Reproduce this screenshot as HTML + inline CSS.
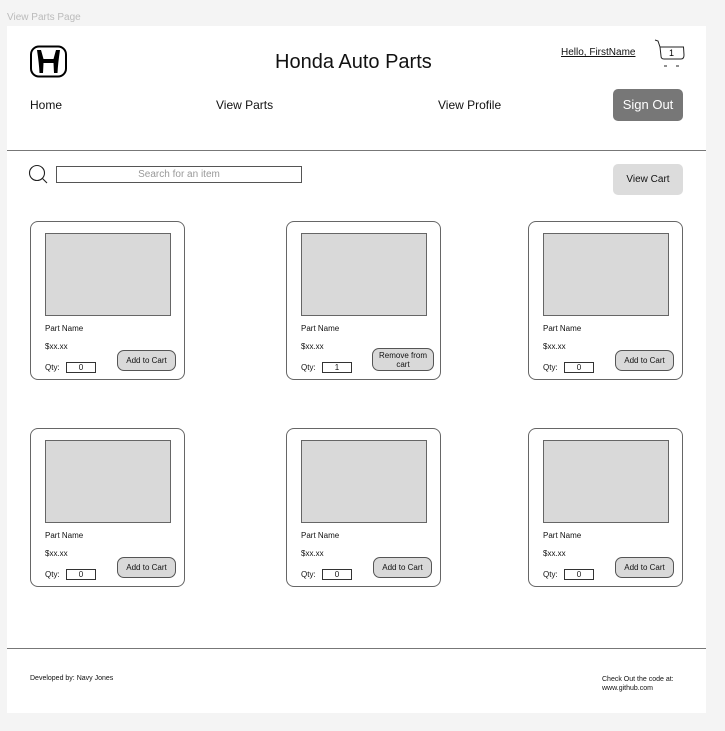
<!DOCTYPE html>
<html><head><meta charset="utf-8"><style>
*{margin:0;padding:0;box-sizing:border-box}
body{width:725px;height:731px;background:#f4f4f4;position:relative;font-family:"Liberation Sans",sans-serif;color:#111;overflow:hidden}
.a{position:absolute;white-space:nowrap}
.panel{position:absolute;left:7px;top:26px;width:699px;height:687px;background:#fff}
.hr{position:absolute;left:7px;width:699px;height:1px;background:#777}
.card{position:absolute;width:155px;height:159px;border:1px solid #666;border-radius:8px;background:#fff}
.img{position:absolute;left:14px;top:11px;width:126px;height:83px;background:#d9d9d9;border:1px solid #666}
.pn{position:absolute;left:14px;top:102px;font-size:8px}
.pr{position:absolute;left:14px;top:120px;font-size:8px}
.q{position:absolute;left:14px;top:141px;font-size:8px}
.qb{position:absolute;left:35px;top:140px;width:30px;height:11px;border:1px solid #333;font-size:8px;text-align:center;line-height:9px}
.btn{position:absolute;left:86px;top:128px;width:59px;height:21px;border:1px solid #555;border-radius:7px;background:#d9d9d9;font-size:8px;text-align:center;line-height:19px}
</style></head><body>
<div class="a" style="left:7px;top:12px;font-size:10px;color:#bbb">View Parts Page</div>
<div class="panel"></div>
<svg class="a" style="left:29px;top:45px" width="40" height="34" viewBox="0 0 40 34">
<rect x="2" y="1.5" width="35" height="30" rx="8" fill="none" stroke="#000" stroke-width="2"/>
<path d="M8 5 L12 5 L14.5 14 L24.5 14 L27 5 L31 5 Q29 18 28.5 28 L25 28 L24.5 18 L14.5 18 L14 28 L10.5 28 Q10 18 8 5 Z" fill="#000"/>
</svg>
<div class="a" style="left:275px;top:51px;font-size:20px">Honda Auto Parts</div>
<div class="a" style="left:561px;top:47px;font-size:10px;text-decoration:underline">Hello, FirstName</div>
<svg class="a" style="left:654px;top:38px" width="34" height="32" viewBox="0 0 34 32">
<path d="M1 2 L4 3 L6 9 L7 18 Q7 21 10 21 L27 21 Q30 21 30 17 L29.5 9 L6 9" fill="none" stroke="#222" stroke-width="1"/>
<text x="15" y="18" font-size="9" font-family="Liberation Sans">1</text>
<path d="M10 28 h3 M22 28 h3" stroke="#222" stroke-width="1"/>
</svg>
<div class="a" style="left:30px;top:98px;font-size:12px">Home</div>
<div class="a" style="left:216px;top:98px;font-size:12px">View Parts</div>
<div class="a" style="left:438px;top:98px;font-size:12px">View Profile</div>
<div class="a" style="left:613px;top:89px;width:70px;height:32px;background:#777;border-radius:5px;color:#fff;font-size:13px;text-align:center;line-height:32px">Sign Out</div>
<div class="hr" style="top:150px"></div>
<svg class="a" style="left:28px;top:164px" width="22" height="22" viewBox="0 0 22 22">
<circle cx="9" cy="9" r="7.5" fill="none" stroke="#222" stroke-width="1.1"/>
<path d="M14.5 14.5 L19 19" stroke="#222" stroke-width="1.1"/>
</svg>
<div class="a" style="left:56px;top:166px;width:246px;height:17px;border:1px solid #555;font-size:10px;color:#999;text-align:center;line-height:15px">Search for an item</div>
<div class="a" style="left:613px;top:164px;width:70px;height:31px;background:#dcdcdc;border-radius:5px;font-size:10px;text-align:center;line-height:31px">View Cart</div>

<div class="card" style="left:30px;top:221px"><div class="img"></div><div class="pn">Part Name</div><div class="pr">$xx.xx</div><div class="q">Qty:</div><div class="qb">0</div><div class="btn">Add to Cart</div></div>
<div class="card" style="left:286px;top:221px"><div class="img"></div><div class="pn">Part Name</div><div class="pr">$xx.xx</div><div class="q">Qty:</div><div class="qb">1</div><div class="btn" style="left:85px;top:126px;width:62px;height:23px;line-height:9px;padding-top:2px">Remove from<br>cart</div></div>
<div class="card" style="left:528px;top:221px"><div class="img"></div><div class="pn">Part Name</div><div class="pr">$xx.xx</div><div class="q">Qty:</div><div class="qb">0</div><div class="btn">Add to Cart</div></div>
<div class="card" style="left:30px;top:428px"><div class="img"></div><div class="pn">Part Name</div><div class="pr">$xx.xx</div><div class="q">Qty:</div><div class="qb">0</div><div class="btn">Add to Cart</div></div>
<div class="card" style="left:286px;top:428px"><div class="img"></div><div class="pn">Part Name</div><div class="pr">$xx.xx</div><div class="q">Qty:</div><div class="qb">0</div><div class="btn">Add to Cart</div></div>
<div class="card" style="left:528px;top:428px"><div class="img"></div><div class="pn">Part Name</div><div class="pr">$xx.xx</div><div class="q">Qty:</div><div class="qb">0</div><div class="btn">Add to Cart</div></div>

<div class="hr" style="top:648px"></div>
<div class="a" style="left:30px;top:675px;font-size:7px">Developed by: Navy Jones</div>
<div class="a" style="left:602px;top:675px;font-size:7px;line-height:9px">Check Out the code at:<br>www.github.com</div>
</body></html>
